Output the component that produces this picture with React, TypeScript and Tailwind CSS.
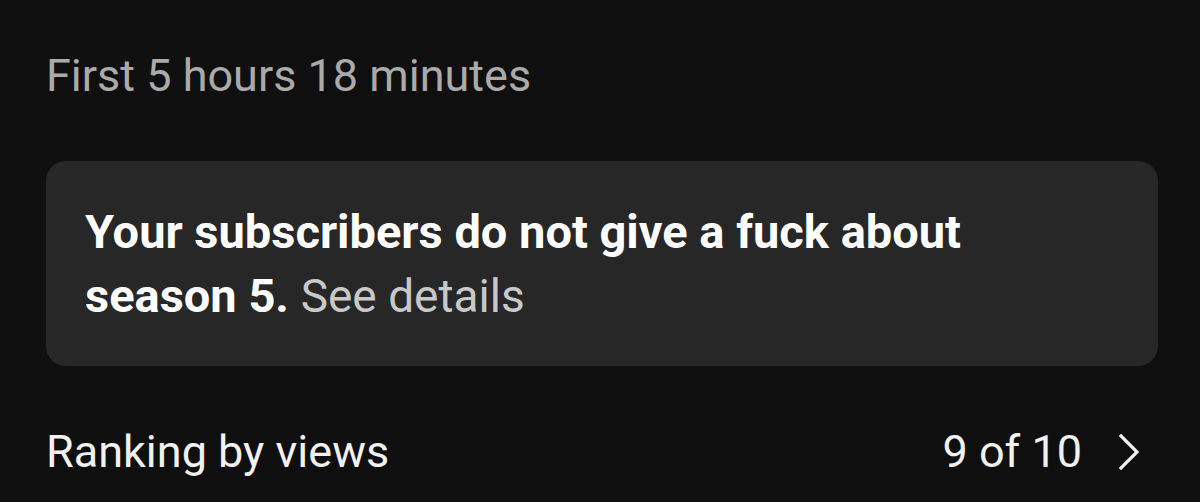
export default function App() {
  return (
    <div className="w-[1200px] h-[502px] bg-[#0f0f0f] overflow-hidden pl-[46px] pr-[42px] pt-[48px]" style={{ fontFamily: "Roboto, 'Noto Sans', sans-serif" }}>
      <div className="text-[45px] leading-[56px] text-[#aaaaaa]">First 5 hours 18 minutes</div>
      <div className="mt-[57px] h-[205px] rounded-[20px] bg-[#272727] pl-[39px] pr-[30px] pt-[39px]">
        <p className="text-[47px] leading-[64px] font-bold text-white">
          Your subscribers do not give a fuck about
          <br />
          season 5. <span className="font-normal text-[#c8c8c8] text-[46px]">See details</span>
        </p>
      </div>
      <div className="mt-[58px] flex items-center justify-between pr-[18px]">
        <div className="text-[45px] leading-[56px] text-[#f1f1f1]">Ranking by views</div>
        <div className="flex items-center gap-[36px]">
          <span className="text-[45px] leading-[56px] text-[#f1f1f1]">9 of 10</span>
          <svg width="22" height="38" viewBox="0 0 22 38" fill="none" stroke="#f1f1f1" strokeWidth="3.2" strokeLinecap="square" strokeLinejoin="miter">
            <path d="M3 3 L19 19 L3 35" />
          </svg>
        </div>
      </div>
    </div>
  );
}
